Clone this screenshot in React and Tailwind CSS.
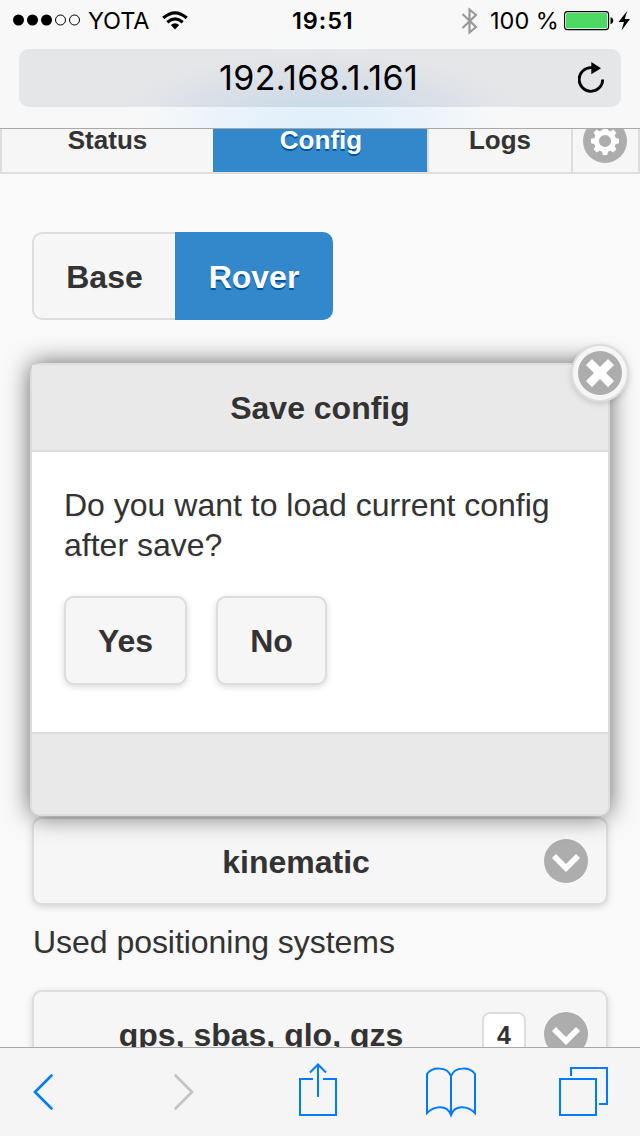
import React from "react";

function StatusBar() {
  return (
    <div className="flex h-10 shrink-0 items-center pl-[13px] pr-[8px] font-[Inter,sans-serif] text-[24px] leading-none text-black">
      <div className="flex w-[279px] shrink-0 items-center">
        <svg width="68" height="12" viewBox="0 0 68 12" className="shrink-0">
          <circle cx="5.5" cy="6" r="5.5" />
          <circle cx="19.5" cy="6" r="5.5" />
          <circle cx="33.5" cy="6" r="5.5" />
          <circle cx="47.5" cy="6" r="5" fill="none" stroke="#000" />
          <circle cx="61.5" cy="6" r="5" fill="none" stroke="#000" />
        </svg>
        <span className="ml-[7px] w-[62px] pt-0.5 text-[23.5px] tracking-[-0.1px]">YOTA</span>
        <svg width="26" height="20" viewBox="0 0 26 20" className="ml-[12px] shrink-0">
          <path d="M1.3 8 Q13 -2.2 24.7 8" fill="none" stroke="#000" strokeWidth="3.3" />
          <path d="M5.3 12.2 Q13 5.6 20.7 12.2" fill="none" stroke="#000" strokeWidth="3.1" />
          <path d="M8.8 15 Q13 11.6 17.2 15 L13 19.4Z" />
        </svg>
      </div>
      <span className="w-[161px] shrink-0 pt-0.5 text-[23.5px] font-semibold tracking-[0.9px]">19:51</span>
      <div className="flex flex-1 items-center">
        <svg width="17" height="28" viewBox="0 0 17 28" className="ml-[8px] mt-0.5 shrink-0">
          <path d="M1.5 7 L15 20 L8.5 25.5 V2.5 L15 8 L1.5 21" fill="none" stroke="#999" strokeWidth="2.2" />
        </svg>
        <span className="ml-[12px] w-[70px] shrink-0 whitespace-nowrap pt-0.5 text-[23.5px]">100 %</span>
        <svg width="68" height="22" viewBox="0 0 68 22" className="ml-[4px] mt-px shrink-0">
          <rect x="0.6" y="1.6" width="44" height="18" rx="2.8" fill="#fff" stroke="#000" strokeWidth="1.1" />
          <rect x="2" y="3" width="41.3" height="15.3" rx="1.2" fill="#4cd964" />
          <path d="M46.5 7.2 Q49.3 8 49.3 10.7 T46.5 14.2Z" />
          <path d="M63.3 0.8 L54.5 12 H60 L57.5 20.5 L66 9 H60.7Z" />
        </svg>
      </div>
    </div>
  );
}

function AddressBar() {
  return (
    <div className="mx-[19px] mt-[9px] flex h-[58px] shrink-0 items-center rounded-[10px] bg-[radial-gradient(ellipse_210px_80px_at_303px_80px,#bdd5ea_0%,#c8dae9_25%,#d6dee7_55%,#dfe2e7_78%,#e5e6e8_100%)]">
      <span className="ml-[200px] w-[358px] text-[34px] leading-none tracking-[0.4px] text-black font-[Inter,sans-serif]">
        192.168.1.161
      </span>
      <svg width="28" height="32" viewBox="0 0 28 32" className="ml-px">
        <path d="M24.7 17.5 A11.8 11.8 0 1 1 13 5.7 H15" fill="none" stroke="#000" strokeWidth="2.8" />
        <path d="M13.3 0 L23 6.2 L13.3 12.2Z" />
      </svg>
    </div>
  );
}

const textShadow = "[text-shadow:0_2px_0_#f3f3f3]";
const blueShadow = "[text-shadow:0_2px_0_#005599]";

function Tabs() {
  return (
    <nav className={`-mt-[21px] flex h-[66px] shrink-0 border-b-2 border-[#ddd] bg-[#f6f6f6] text-[26px] font-bold ${textShadow}`}>
      <div className="flex w-[213px] items-center justify-center border-l-2 border-[#ddd]">Status</div>
      <div className={`flex w-[214px] items-center justify-center bg-[#3388cc] pl-0.5 text-white ${blueShadow}`}>Config</div>
      <div className="flex w-[146px] items-center justify-center border-x-2 border-[#ddd]">Logs</div>
      <div className="flex w-[67px] items-center justify-center border-r-2 border-[#ddd] pr-0.5">
        <svg width="44" height="44" viewBox="0 0 44 44" className="mt-0.5">
          <circle cx="22" cy="22" r="22" fill="#adadad" />
          <circle cx="22" cy="22" r="8.6" fill="none" stroke="#fff" strokeWidth="5" />
          <g fill="#fff">
            {[0, 45, 90, 135, 180, 225, 270, 315].map((a) => (
              <path key={a} d="M18.8 12.5 L19.8 8 H24.2 L25.2 12.5Z" transform={`rotate(${a} 22 22)`} />
            ))}
          </g>
        </svg>
      </div>
    </nav>
  );
}

function Chevron() {
  return (
    <svg width="44" height="44" viewBox="0 0 44 44" className="shrink-0">
      <circle cx="22" cy="22" r="22" fill="#adadad" />
      <path d="M12 15 L8 19 L22 33 L36 19 L32 15 L22 25Z" fill="#fff" />
    </svg>
  );
}

function Select({ label, count, className = "", labelClass = "" }) {
  return (
    <div className={`flex h-[88px] shrink-0 items-center rounded-[10px] border-2 border-[#ddd] bg-[#f6f6f6] pr-[18px] shadow-[0_2px_6px_rgba(0,0,0,0.15)] ${className}`}>
      <span className={`flex-1 pt-0.5 text-center text-[32px] font-bold leading-10 ${textShadow} ${labelClass}`}>{label}</span>
      {count && (
        <span className="mr-[18px] flex h-[44px] w-[44px] items-center justify-center rounded-[8px] border-2 border-[#ddd] bg-white pt-[3px] text-[25px] font-bold">
          {count}
        </span>
      )}
      <Chevron />
    </div>
  );
}

function DialogButton({ children, className }) {
  return (
    <button className={`h-[89px] rounded-[10px] border-2 border-[#ddd] bg-[#f6f6f6] text-[32px] font-bold shadow-[0_2px_6px_rgba(0,0,0,0.15)] ${textShadow} ${className}`}>
      {children}
    </button>
  );
}

function SaveDialog() {
  return (
    <div className="absolute left-[30px] top-[234px] flex h-[453px] w-[580px] flex-col rounded-[10px] border-2 border-[#ddd] bg-white shadow-[0_0_24px_rgba(0,0,0,0.6)]">
      <h1 className="flex h-[87px] shrink-0 items-center justify-center border-b-2 border-[#ddd] bg-[#e9e9e9] text-[32px] font-bold leading-10 [text-shadow:0_2px_0_#eee]">
        Save config
      </h1>
      <div className="flex-1 px-8 pt-[33px]">
        <p className={`text-[32px] leading-10 ${textShadow}`}>
          Do you want to load current config after save?
        </p>
        <div className="mt-[31px] flex gap-[29px]">
          <DialogButton className="w-[123px]">Yes</DialogButton>
          <DialogButton className="w-[111px]">No</DialogButton>
        </div>
      </div>
      <div className="h-[82px] shrink-0 rounded-b-[8px] border-t-2 border-[#ddd] bg-[#e9e9e9]" />
      <button className="absolute -right-[21px] -top-[21px] flex h-[58px] w-[58px] items-center justify-center rounded-full border-2 border-[#ddd] bg-[#f6f6f6] shadow-[0_2px_6px_rgba(0,0,0,0.15)]">
        <svg width="44" height="44" viewBox="0 0 44 44" className="shrink-0">
          <circle cx="22" cy="22" r="22" fill="#adadad" />
          <path d="M36 14 L30 8 L22 16 L14 8 L8 14 L16 22 L8 30 L14 36 L22 28 L30 36 L36 30 L28 22Z" fill="#fff" />
        </svg>
      </button>
    </div>
  );
}

function Toolbar() {
  return (
    <footer className="flex h-[89px] shrink-0 items-center border-t border-[#a8a8a8] bg-[#f5f5f5]">
      <svg width="640" height="88" viewBox="0 1048 640 88" fill="none" stroke="#007aff" strokeWidth="2">
        <path d="M51.5 1075.5 L35 1092 L51.5 1108.5" strokeWidth="2.6" strokeLinecap="round" />
        <path d="M175.5 1075.5 L192 1092 L175.5 1108.5" stroke="#c3c3c3" strokeWidth="2.6" strokeLinecap="round" />
        <path d="M313 1079 H300 V1115 H336 V1079 H323 M318 1097 V1065 M310 1072.5 L318 1064.5 L326 1072.5" />
        <path d="M451 1115 V1076 C447 1066 432 1067 427 1074 V1113 C434 1106 447 1104 451 1115 C455 1104 468 1106 475 1113 V1074 C470 1067 455 1066 451 1076" />
        <path d="M560 1079 H596 V1115 H560Z M571 1076 V1068 H607 V1104 H599" />
      </svg>
    </footer>
  );
}

export default function App() {
  return (
    <div className="flex h-[1136px] w-[640px] flex-col overflow-hidden bg-[#f9f9f9] font-['Liberation_Sans',Arial,sans-serif] text-[#333]">
      <header className="flex h-[129px] shrink-0 flex-col border-b border-[#a8a8a8] bg-[#f8f8f8] bg-[radial-gradient(ellipse_190px_90px_at_320px_128px,#dfeffb_0%,#e8f2fa_45%,#f4f7f9_80%,#f8f8f8_100%)]">
        <StatusBar />
        <AddressBar />
      </header>
      <main className="relative flex min-h-0 flex-1 flex-col overflow-hidden">
        <Tabs />
        <div className="ml-8 mt-[58px] flex h-[88px] w-[301px] shrink-0 text-[32px] font-bold">
          <div className={`flex w-[143px] items-center justify-center rounded-l-[10px] border-2 border-r-0 border-[#ddd] bg-[#f6f6f6] pt-0.5 ${textShadow}`}>Base</div>
          <div className={`flex flex-1 items-center justify-center rounded-r-[10px] bg-[#3388cc] pt-0.5 text-white ${blueShadow}`}>Rover</div>
        </div>
        <Select label="kinematic" className="mx-8 mt-[497px]" labelClass="pl-[14px]" />
        <p className={`ml-[33px] mt-[17px] shrink-0 text-[32px] leading-10 tracking-[-0.04px] ${textShadow}`}>Used positioning systems</p>
        <Select label="gps, sbas, glo, qzs" count="4" className="mx-8 mt-[28px]" labelClass="pl-[6px]" />
        <SaveDialog />
      </main>
      <Toolbar />
    </div>
  );
}
